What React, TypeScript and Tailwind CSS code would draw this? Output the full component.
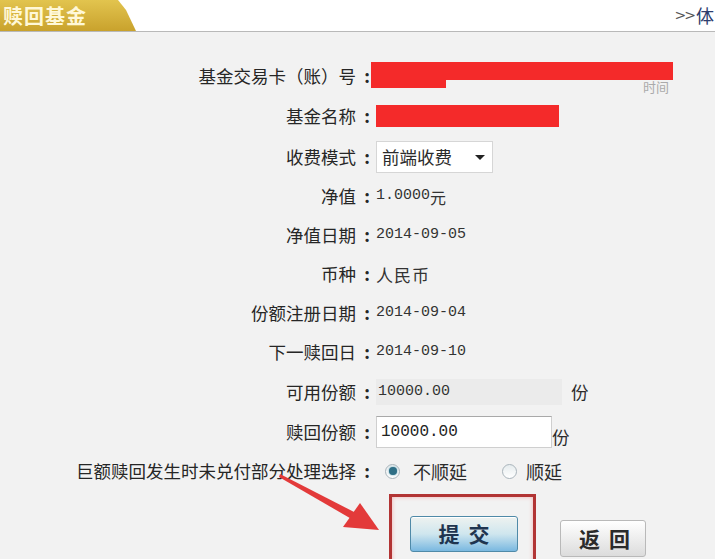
import React from 'react'

const cjk = "font-['Noto_Sans_CJK_SC','Noto_Sans',sans-serif]"
const mono = "font-['Liberation_Mono','Noto_Sans_CJK_SC',monospace]"

type RowProps = { label: string; h: string; children?: React.ReactNode }

// label column ends at x=372, value starts right after
const Label: React.FC<{ text: string }> = ({ text }) => (
  <div className={`w-[372px] shrink-0 text-right text-[17.5px] text-[#262626] ${cjk}`}>
    {text}
    <span className="inline-block w-[16px] pr-[2px] text-right font-bold">:</span>
  </div>
)

const Row: React.FC<RowProps> = ({ label, h, children }) => (
  <div className={`flex items-center ${h}`}>
    <Label text={label} />
    <div className="flex items-center pl-[4px] text-[15px] text-[#333]">{children}</div>
  </div>
)

const Radio: React.FC<{ checked?: boolean }> = ({ checked }) => (
  <span className="flex h-[15px] w-[15px] items-center justify-center rounded-full border border-[#a9b4bb] bg-gradient-to-b from-[#e6ecee] to-[#ffffff]">
    {checked && <span className="h-[8px] w-[8px] rounded-full bg-[#2f6f86] shadow-[0_0_2px_#5aa0b8]" />}
  </span>
)

export default function App() {
  return (
    <div className={`relative h-[559px] w-[715px] overflow-hidden bg-[#f2f2f2] ${cjk}`}>
      {/* header */}
      <div className="flex h-[32px] items-stretch justify-between border-b border-[#b9b9b9] bg-white">
        <div className="flex w-[136px] items-center bg-gradient-to-b from-[#e2c44e] to-[#c9a22c] pl-[3px] [clip-path:polygon(0_0,118px_0,126px_10px,136px_100%,0_100%)]">
          <span className="text-[20px] font-bold tracking-[1px] text-[#fff8d8]">赎回基金</span>
        </div>
        <div className="flex items-center gap-[2px] pr-[1px] text-[18px] text-[#2d3d6e]">
          <span className="font-['DejaVu_Sans',sans-serif] text-[14px] tracking-[-2px] text-[#555]">&gt;&gt;</span>
          <span>体</span>
        </div>
      </div>

      {/* form */}
      <div className="flex flex-col pt-[24px]">
        <Row label="基金交易卡（账）号" h="h-[40px]">
          <div className="relative -ml-[5px] h-[24px] w-[302px]">
            <span className="absolute right-[4px] top-[13px] text-[13px] text-[#aaa]">时间</span>
            <div className="absolute left-0 top-[-2px] h-[18px] w-[302px] bg-[#f42a2a]" />
            <div className="absolute left-0 top-[10px] h-[14px] w-[75px] bg-[#f42a2a]" />
          </div>
        </Row>
        <Row label="基金名称" h="h-[41px]">
          <div className="-mt-[2px] h-[22px] w-[183px] bg-[#f42a2a]" />
        </Row>
        <Row label="收费模式" h="h-[40px]">
          <div className={`flex h-[32px] w-[117px] items-center justify-between border border-[#d6d6d6] bg-white pl-[5px] pr-[7px] text-[17.5px] text-[#2b2b2b] ${cjk}`}>
            <span>前端收费</span>
            <span className="h-0 w-0 border-x-[5px] border-t-[5px] border-x-transparent border-t-[#222]" />
          </div>
        </Row>
        <Row label="净值" h="h-[39px]">
          <span className={mono}>1.0000</span>
          <span className="text-[16px]">元</span>
        </Row>
        <Row label="净值日期" h="h-[39px]">
          <span className={mono}>2014-09-05</span>
        </Row>
        <Row label="币种" h="h-[39px]">
          <span className="text-[17px] tracking-[1px]">人民币</span>
        </Row>
        <Row label="份额注册日期" h="h-[39px]">
          <span className={mono}>2014-09-04</span>
        </Row>
        <Row label="下一赎回日" h="h-[39px]">
          <span className={mono}>2014-09-10</span>
        </Row>
        <Row label="可用份额" h="h-[40px]">
          <div className="flex h-[26px] w-[186px] items-center bg-[#ebebeb] pl-[2px]">
            <span className={mono}>10000.00</span>
          </div>
          <span className="ml-[9px] text-[17.5px] text-[#2b2b2b]">份</span>
        </Row>
        <Row label="赎回份额" h="h-[40px]">
          <div className="flex h-[32px] w-[176px] items-center border border-[#cfcfcf] border-t-[#a9a9a9] bg-white pl-[4px]">
            <span className={`${mono} text-[16px] text-[#222]`}>10000.00</span>
          </div>
          <span className="mt-[10px] text-[17.5px] text-[#2b2b2b]">份</span>
        </Row>
        <div className="flex h-[38px] items-center">
          <Label text="巨额赎回发生时未兑付部分处理选择" />
          <div className="flex items-center pl-[13px] text-[18px] text-[#2b2b2b]">
            <Radio checked />
            <span className="ml-[13px]">不顺延</span>
            <span className="ml-[35px]"><Radio /></span>
            <span className="ml-[9px]">顺延</span>
          </div>
        </div>

        {/* buttons */}
        <div className="flex items-start pl-[389px] pt-[4px]">
          <div className="h-[80px] w-[147px] border-[3px] border-[#b23434] pl-[18px] pt-[19px] shadow-[inset_0_0_4px_#f3b0b0]">
            <button className="flex h-[36px] w-[108px] items-center justify-center rounded-[3px] border border-[#4f8aa8] bg-gradient-to-b from-[#eef2f0] via-[#cfe6ee] to-[#79b8e0] text-[21px] font-bold tracking-[9px] text-[#1f3550] shadow-[inset_0_1px_0_#fff]">
              <span className="ml-[9px]">提交</span>
            </button>
          </div>
          <div className="ml-[24px] mt-[26px] flex h-[37px] w-[86px] items-center justify-center rounded-[3px] border border-[#b9b9b9] bg-gradient-to-b from-[#ffffff] to-[#dcdcdc] text-[21px] font-bold tracking-[9px] text-[#2b2b2b]">
            <span className="ml-[12px]">返回</span>
          </div>
        </div>
      </div>

      {/* annotation arrow */}
      <svg className="absolute left-[270px] top-[466px]" width="115" height="70" viewBox="0 0 115 70">
        <polygon points="10,8 88,48 85,55 9,11" fill="#e33a3a" />
        <polygon points="109,64 73,61 90,37" fill="#e33a3a" />
      </svg>
    </div>
  )
}
